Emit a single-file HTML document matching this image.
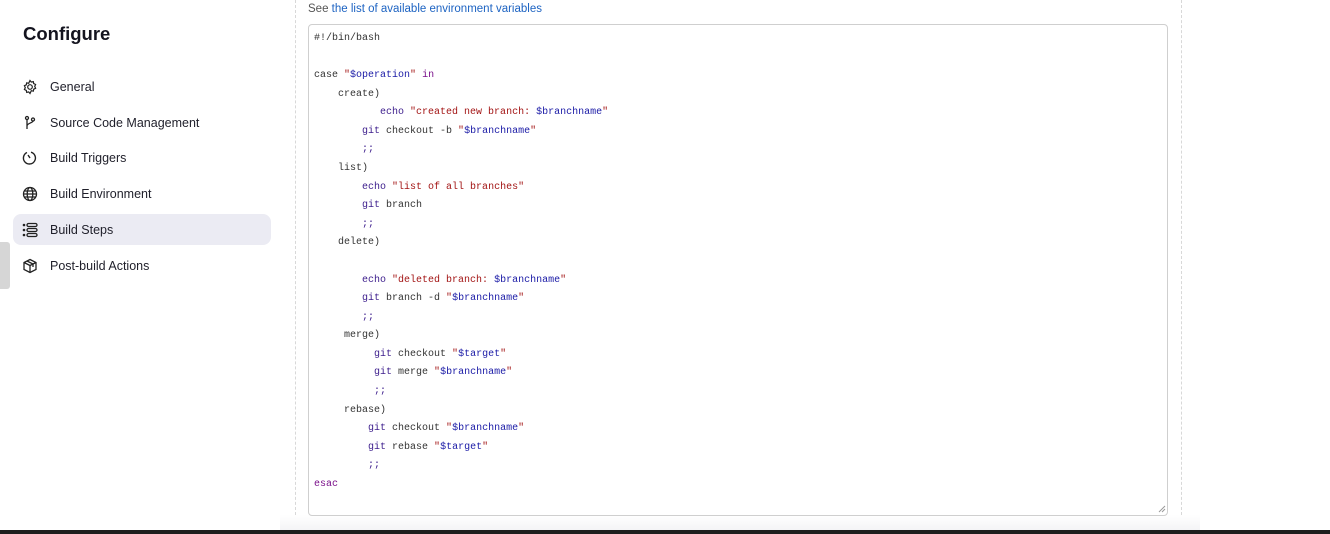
<!DOCTYPE html>
<html><head><meta charset="utf-8"><style>
body{margin:0;width:1330px;height:534px;background:#fff;position:relative;overflow:hidden;font-family:"Liberation Sans",sans-serif;}
h1{position:absolute;left:23px;top:23px;margin:0;font-size:18.5px;font-weight:bold;color:#14141f;}
.it{position:absolute;left:22px;height:20px;font-size:12.5px;color:#1f1f2a;display:flex;align-items:center;}
.it svg{width:16px;height:16px;margin-right:12px;}
.hl{position:absolute;left:13px;top:214px;width:258px;height:31px;background:#ebebf3;border-radius:8px;}
.handle{position:absolute;left:0;top:242px;width:10px;height:47px;background:#d6d6d6;border-radius:0 3px 3px 0;}
.dl{position:absolute;top:0;height:525px;border-left:1px dashed #d8d8d8;}
.see{position:absolute;left:308px;top:3px;font-size:11.5px;color:#555;}
.see a{color:#1d63c2;text-decoration:none;}
.ta{position:absolute;left:308px;top:24px;width:858px;height:490px;border:1px solid #cfcfcf;border-radius:4px;}
pre{position:absolute;left:314px;top:30px;margin:0;font-family:"Liberation Mono",monospace;font-size:10px;line-height:18.58px;color:#333;}
.k{color:#3c1d8c}.p{color:#7a0f8a}.s{color:#a31515}.v{color:#1a1aa6}
.bar{position:absolute;left:0;top:530px;width:1330px;height:4px;background:#1e1e1e;}
.sh{position:absolute;left:280px;top:515px;width:920px;height:15px;background:linear-gradient(#fff,#f4f4f6);}
</style></head><body>
<h1>Configure</h1>
<div class="hl"></div>
<div class="handle"></div>
<div class="it" style="top:77px"><svg viewBox="0 0 16 16" fill="none" stroke="#222" stroke-width="1.2"><circle cx="8" cy="8" r="2.3"/><path d="M8 1.5l1.3 1.6 2-.5.4 2 1.9.9-.9 1.9.9 1.9-1.9.9-.4 2-2-.5L8 14.5l-1.3-1.6-2 .5-.4-2-1.9-.9.9-1.9-.9-1.9 1.9-.9.4-2 2 .5z"/></svg>General</div>
<div class="it" style="top:113px"><svg viewBox="0 0 16 16" fill="none" stroke="#222" stroke-width="1.3"><circle cx="5" cy="3" r="1.5"/><circle cx="11" cy="4.5" r="1.5"/><path d="M5 4.5V14M5 11c0-3 6-3 6-5"/></svg>Source Code Management</div>
<div class="it" style="top:148px"><svg viewBox="0 0 16 16" fill="none" stroke="#222" stroke-width="1.4"><path d="M5 2.5A6 6 0 1 0 9 2.2"/><path d="M8 8L6 5"/></svg>Build Triggers</div>
<div class="it" style="top:184px"><svg viewBox="0 0 16 16" fill="none" stroke="#222" stroke-width="1.3"><circle cx="8" cy="8" r="6.5"/><ellipse cx="8" cy="8" rx="2.8" ry="6.5"/><path d="M1.5 8h13M2.5 5h11M2.5 11h11"/></svg>Build Environment</div>
<div class="it" style="top:220px"><svg viewBox="0 0 16 16" fill="#222"><circle cx="2" cy="3" r="1.3"/><circle cx="2" cy="8" r="1.3"/><circle cx="2" cy="13" r="1.3"/><rect x="5" y="1.5" width="10" height="3" rx="1.5" fill="none" stroke="#222" stroke-width="1.3"/><rect x="5" y="6.5" width="10" height="3" rx="1.5" fill="none" stroke="#222" stroke-width="1.3"/><rect x="5" y="11.5" width="10" height="3" rx="1.5" fill="none" stroke="#222" stroke-width="1.3"/></svg>Build Steps</div>
<div class="it" style="top:256px"><svg viewBox="0 0 16 16" fill="none" stroke="#222" stroke-width="1.3"><path d="M8 1.5l6 3v7l-6 3-6-3v-7z"/><path d="M2 4.5l6 3 6-3M8 7.5v7M5 3l6 3v3"/></svg>Post-build Actions</div>
<div class="dl" style="left:295px"></div>
<div class="dl" style="left:1181px"></div>
<div class="sh"></div>
<div class="see">See <a>the list of available environment variables</a></div>
<div class="ta"></div>
<svg style="position:absolute;left:1158px;top:505px" width="8" height="8"><path d="M1 7L7 1M4 7L7 4" stroke="#999" stroke-width="1"/></svg>
<pre>#!/bin/bash

case <span class="s">"<span class="v">$operation</span>"</span> <span class="p">in</span>
    create)
           <span class="k">echo</span> <span class="s">"created new branch: <span class="v">$branchname</span>"</span>
        <span class="k">git</span> checkout -b <span class="s">"<span class="v">$branchname</span>"</span>
        <span class="k">;;</span>
    list)
        <span class="k">echo</span> <span class="s">"list of all branches"</span>
        <span class="k">git</span> branch
        <span class="k">;;</span>
    delete)

        <span class="k">echo</span> <span class="s">"deleted branch: <span class="v">$branchname</span>"</span>
        <span class="k">git</span> branch -d <span class="s">"<span class="v">$branchname</span>"</span>
        <span class="k">;;</span>
     merge)
          <span class="k">git</span> checkout <span class="s">"<span class="v">$target</span>"</span>
          <span class="k">git</span> merge <span class="s">"<span class="v">$branchname</span>"</span>
          <span class="k">;;</span>
     rebase)
         <span class="k">git</span> checkout <span class="s">"<span class="v">$branchname</span>"</span>
         <span class="k">git</span> rebase <span class="s">"<span class="v">$target</span>"</span>
         <span class="k">;;</span>
<span class="p">esac</span></pre>
<div class="bar"></div>
</body></html>
